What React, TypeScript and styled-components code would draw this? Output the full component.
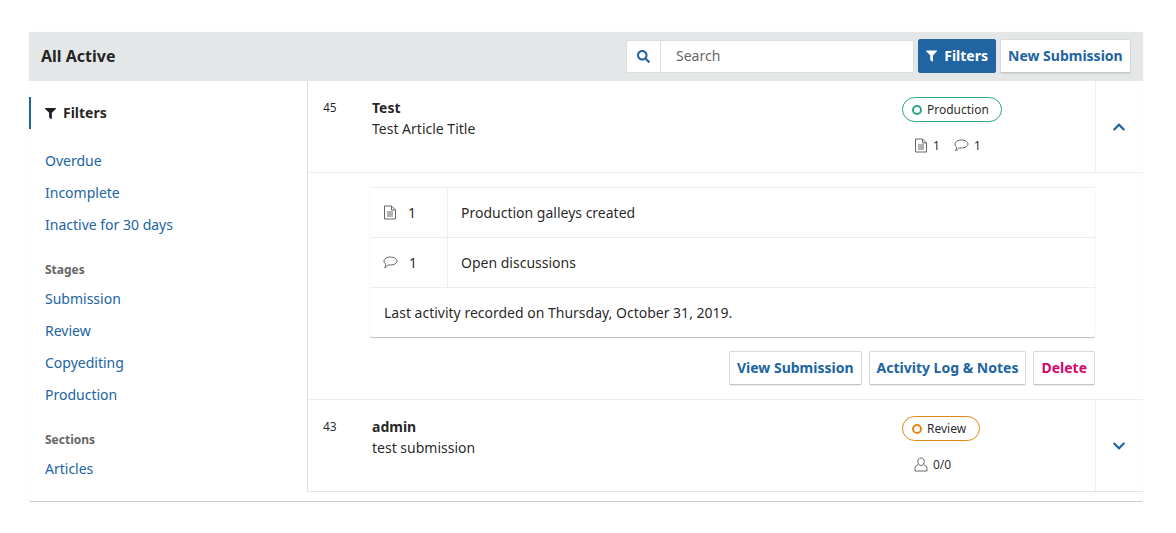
import styled, { createGlobalStyle } from 'styled-components';
import { FaFilter, FaSearch, FaChevronUp, FaChevronDown } from 'react-icons/fa';

// styles
const GlobalStyle = createGlobalStyle`
  html, body {
    margin: 0;
    background: #fff;
    font-family: "Noto Sans", "Open Sans", sans-serif;
    font-size: 14px;
    color: rgba(0, 0, 0, 0.87);
  }
  *, *::before { box-sizing: border-box; }
`;

const Page = styled.div`
  padding: 32px 33px 32px 29px;
`;

const Panel = styled.div`
  width: 1114px;
  height: 469px;
  display: flex;
  flex-direction: column;
  border-radius: 2px;
  box-shadow: 0 1px 0 #ccc, 0 0 1px rgba(0, 0, 0, 0.12);
`;

const Header = styled.div`
  height: 49px;
  flex: none;
  display: flex;
  align-items: center;
  padding: 0 12px 1px;
  background: #e4e7e8;
`;

const Heading = styled.div`
  flex: 1;
  font-size: 16px;
  font-weight: 700;
  line-height: 20px;
`;

const SearchBox = styled.div`
  width: 288px;
  height: 33px;
  display: flex;
  background: #fff;
  border: 1px solid #ddd;
  border-radius: 2px;
`;

const SearchIcon = styled.div`
  width: 34px;
  flex: none;
  display: flex;
  align-items: center;
  justify-content: center;
  color: #2064a2;
  font-size: 13px;
  border-right: 1px solid #ddd;
`;

const SearchText = styled.div`
  padding-left: 15px;
  line-height: 29px;
  color: #666;
`;

const Button = styled.div<{ $color?: string }>`
  height: 34px;
  display: flex;
  align-items: center;
  padding: 0 7px 2px;
  background: #fff;
  border: 1px solid rgba(0, 0, 0, 0.15);
  border-bottom-color: rgba(0, 0, 0, 0.22);
  border-radius: 2px;
  box-shadow: 0 1px 0 rgba(0, 0, 0, 0.08);
  color: ${(p) => p.$color || '#2064a2'};
  font-size: 14px;
  font-weight: 700;
  white-space: nowrap;
`;

const FilterButton = styled(Button)`
  margin-left: 4px;
  width: 78px;
  gap: 7px;
  background: #2064a2;
  border-color: #2064a2;
  box-shadow: none;
  color: #fff;
  font-size: 14px;
  svg { font-size: 12px; margin-top: 2px; }
`;

const NewButton = styled(Button)`
  margin-left: 4px;
  width: 131px;
`;

const Body = styled.div`
  flex: 1;
  display: flex;
  min-height: 0;
`;

const Sidebar = styled.div`
  width: 278px;
  flex: none;
  padding-top: 16px;
`;

const SidebarHead = styled.div`
  height: 32px;
  display: flex;
  align-items: center;
  gap: 7px;
  padding: 0 0 2px 14px;
  border-left: 2px solid #2064a2;
  font-weight: 700;
  font-size: 14px;
  svg { font-size: 11px; margin-top: 2px; }
`;

const SideGroup = styled.div<{ $top: number }>`
  margin-top: ${(p) => p.$top}px;
  padding-left: 16px;
`;

const GroupLabel = styled.div`
  height: 20px;
  line-height: 20px;
  margin-bottom: 3px;
  font-size: 12px;
  font-weight: 700;
  color: #666;
`;

const SideLink = styled.div`
  height: 32px;
  line-height: 32px;
  color: #2064a2;
  font-size: 14px;
`;

const List = styled.div`
  flex: 1;
  align-self: flex-start;
  border-left: 1px solid #ddd;
  border-bottom: 1px solid #e4e4e4;
`;

const Row = styled.div<{ $h: number }>`
  height: ${(p) => p.$h}px;
  display: flex;
  border-bottom: 1px solid #eee;
  &:last-child { border-bottom: none; }
`;

const RowMain = styled.div`
  flex: 1;
  display: flex;
  padding-top: 16px;
`;

const RowId = styled.div`
  width: 64px;
  padding-left: 15px;
  padding-top: 2px;
  font-size: 12px;
  line-height: 18px;
`;

const RowTitle = styled.div`
  width: 530px;
  line-height: 21px;
`;

const Author = styled.div`
  font-weight: 700;
`;

const RowStatus = styled.div`
  width: 130px;
`;

const Stage = styled.div<{ $color: string; $w: number }>`
  width: ${(p) => p.$w}px;
  height: 25px;
  display: flex;
  align-items: center;
  gap: 5px;
  padding-left: 9px;
  border: 1px solid ${(p) => p.$color};
  border-radius: 13px;
  font-size: 12px;
  line-height: 16px;
  &::before {
    content: '';
    width: 10px;
    height: 10px;
    border: 2px solid ${(p) => p.$color};
    border-radius: 50%;
  }
`;

const Stats = styled.div`
  margin-top: 14px;
  padding-left: 12px;
  height: 18px;
  display: flex;
  align-items: center;
  font-size: 12px;
`;

const Stat = styled.span`
  display: flex;
  align-items: center;
  gap: 5px;
  margin-right: 14px;
`;

const Toggle = styled.div`
  width: 48px;
  flex: none;
  display: flex;
  align-items: center;
  justify-content: center;
  padding-right: 1px;
  border-left: 1px solid #eee;
  color: #2064a2;
  font-size: 14px;
`;

const Expanded = styled.div`
  height: 227px;
  padding: 14px 48px 0 62px;
  border-bottom: 1px solid #eee;
`;

const Details = styled.div`
  border-top: 1px solid #eee;
  border-radius: 2px;
  box-shadow: 0 1px 1px rgba(0, 0, 0, 0.25);
`;

const DetailRow = styled.div`
  height: 50px;
  display: flex;
  align-items: center;
  border-bottom: 1px solid #eee;
  &:last-child { border-bottom: none; height: 49px; }
`;

const DetailCount = styled.div`
  width: 78px;
  height: 100%;
  flex: none;
  display: flex;
  align-items: center;
  gap: 11px;
  padding-left: 13px;
  border-right: 1px solid #eee;
`;

const DetailText = styled.div<{ $indent: number }>`
  padding-left: ${(p) => p.$indent}px;
`;

const Actions = styled.div`
  margin-top: 14px;
  display: flex;
  justify-content: flex-end;
  gap: 7px;
`;

// icons
function DocIcon() {
  return (
    <svg width="14" height="15" viewBox="0 0 14 15" fill="none" stroke="#666" strokeWidth="1">
      <path d="M1.5 1h7l4 4v9h-11z" />
      <path d="M8.500 1v4h4M4 7h6M4 9h6M4 11h6" />
    </svg>
  );
}

function CommentIcon() {
  return (
    <svg width="15" height="13" viewBox="0 0 15 13" fill="none" stroke="#666" strokeWidth="1">
      <path d="M7.5 1C11 1 14 2.800 14 5s-3 4-6.500 4c-.8 0-1.500-.1-2.200-.2C4.500 10.300 3 11.500 1.500 11.500c.8-.8 1.300-2 1.300-3.200C1.700 7.500 1 6.300 1 5c0-2.200 3-4 6.500-4z" />
    </svg>
  );
}

function UserIcon() {
  return (
    <svg width="14" height="15" viewBox="0 0 14 15" fill="none" stroke="#666" strokeWidth="1">
      <path d="M7 1c2 0 3.200 1.500 3.200 3.500S9 8.500 7 8.500 3.800 6.500 3.800 4.500 5 1 7 1z" />
      <path d="M4.500 7.500C2.500 8.200 1 9.500 1 11.500V14h12v-2.500c0-2-1.500-3.300-3.500-4" />
    </svg>
  );
}

// component
export default function App() {
  return (
    <Page>
      <GlobalStyle />
      <Panel>
        <Header>
          <Heading>All Active</Heading>
          <SearchBox>
            <SearchIcon><FaSearch /></SearchIcon>
            <SearchText>Search</SearchText>
          </SearchBox>
          <FilterButton><FaFilter />Filters</FilterButton>
          <NewButton>New Submission</NewButton>
        </Header>
        <Body>
          <Sidebar>
            <SidebarHead><FaFilter />Filters</SidebarHead>
            <SideGroup $top={16}>
              <SideLink>Overdue</SideLink>
              <SideLink>Incomplete</SideLink>
              <SideLink>Inactive for 30 days</SideLink>
            </SideGroup>
            <SideGroup $top={19}>
              <GroupLabel>Stages</GroupLabel>
              <SideLink>Submission</SideLink>
              <SideLink>Review</SideLink>
              <SideLink>Copyediting</SideLink>
              <SideLink>Production</SideLink>
            </SideGroup>
            <SideGroup $top={19}>
              <GroupLabel>Sections</GroupLabel>
              <SideLink>Articles</SideLink>
            </SideGroup>
          </Sidebar>
          <List>
            <Row $h={92}>
              <RowMain>
                <RowId>45</RowId>
                <RowTitle>
                  <Author>Test</Author>
                  <div>Test Article Title</div>
                </RowTitle>
                <RowStatus>
                  <Stage $color="#2aa585" $w={100}>Production</Stage>
                  <Stats>
                    <Stat><DocIcon />1</Stat>
                    <Stat><CommentIcon />1</Stat>
                  </Stats>
                </RowStatus>
              </RowMain>
              <Toggle><FaChevronUp /></Toggle>
            </Row>
            <Expanded>
              <Details>
                <DetailRow>
                  <DetailCount><DocIcon />1</DetailCount>
                  <DetailText $indent={13}>Production galleys created</DetailText>
                </DetailRow>
                <DetailRow>
                  <DetailCount><CommentIcon />1</DetailCount>
                  <DetailText $indent={13}>Open discussions</DetailText>
                </DetailRow>
                <DetailRow>
                  <DetailText $indent={14}>Last activity recorded on Thursday, October 31, 2019.</DetailText>
                </DetailRow>
              </Details>
              <Actions>
                <Button>View Submission</Button>
                <Button>Activity Log &amp; Notes</Button>
                <Button $color="#d00a6c">Delete</Button>
              </Actions>
            </Expanded>
            <Row $h={91}>
              <RowMain>
                <RowId>43</RowId>
                <RowTitle>
                  <Author>admin</Author>
                  <div>test submission</div>
                </RowTitle>
                <RowStatus>
                  <Stage $color="#e08914" $w={78}>Review</Stage>
                  <Stats>
                    <Stat><UserIcon />0/0</Stat>
                  </Stats>
                </RowStatus>
              </RowMain>
              <Toggle><FaChevronDown /></Toggle>
            </Row>
          </List>
        </Body>
      </Panel>
    </Page>
  );
}
